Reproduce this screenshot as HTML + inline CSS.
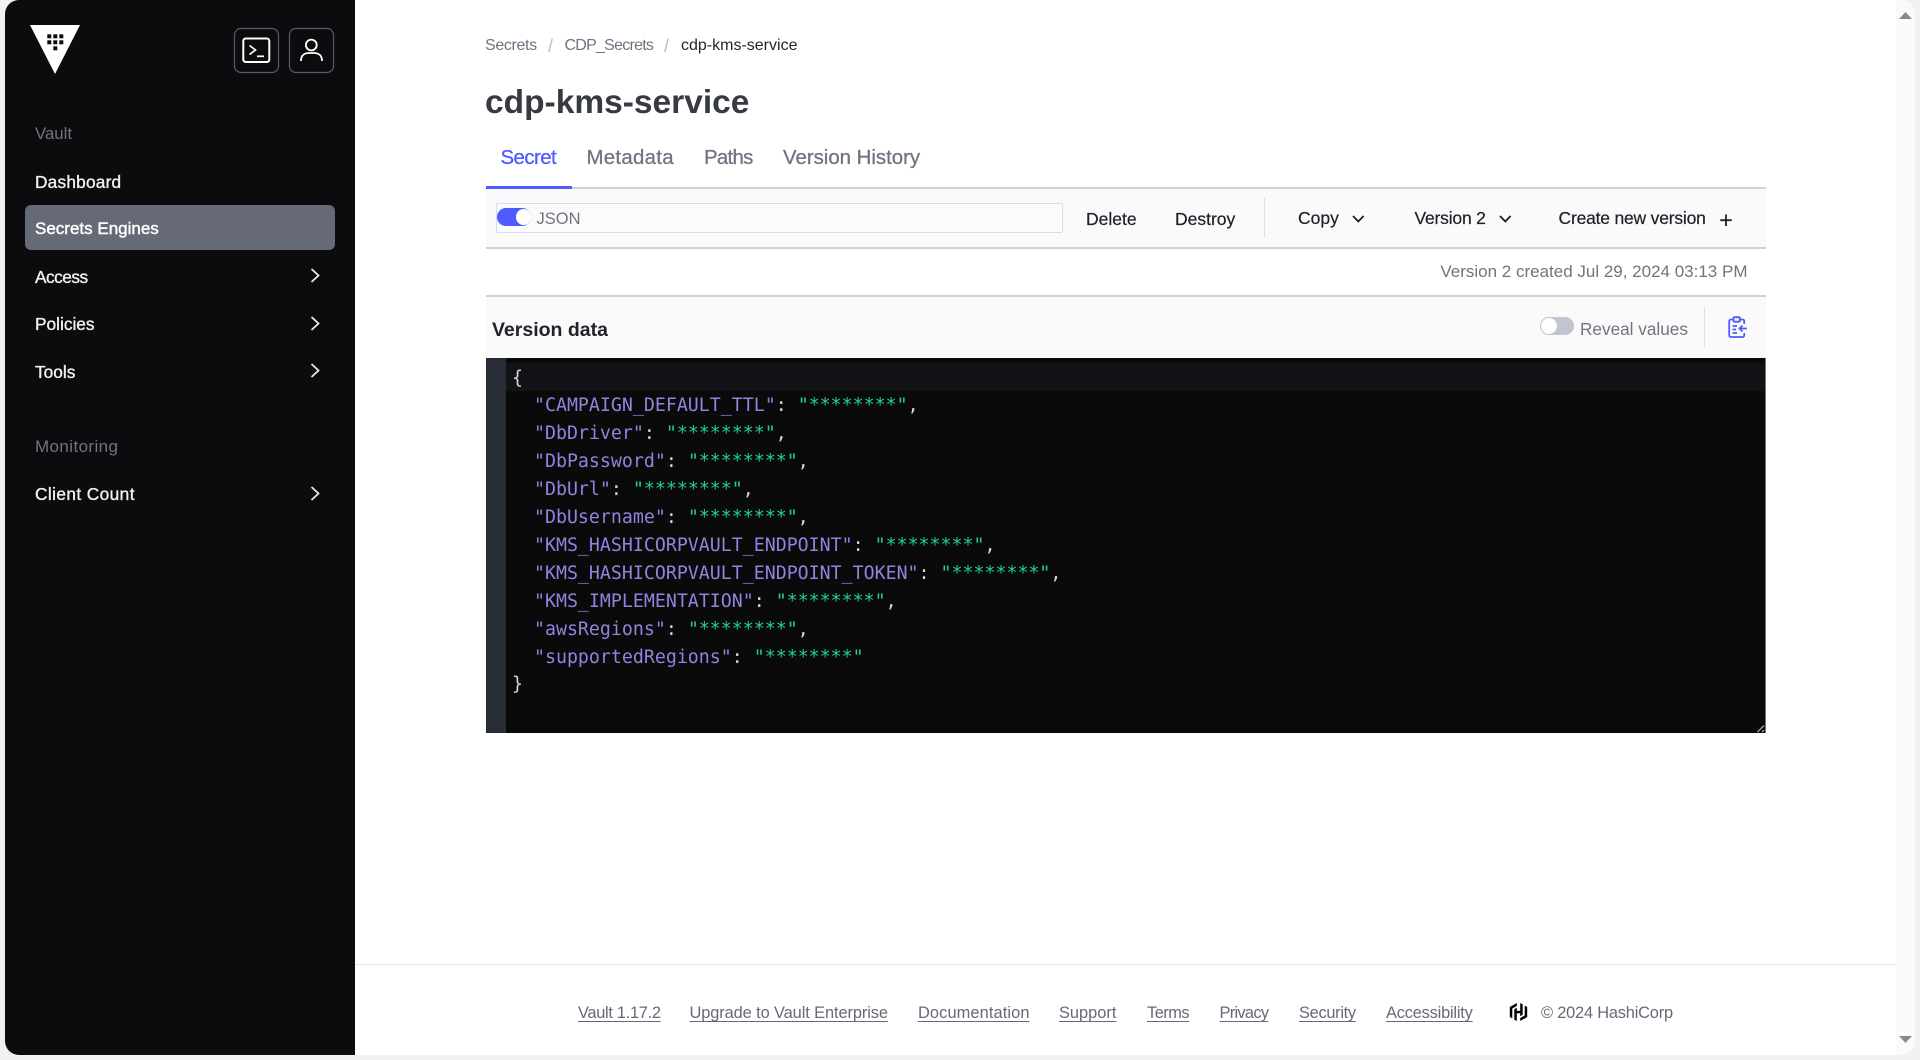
<!DOCTYPE html>
<html lang="en">
<head>
<meta charset="utf-8">
<title>cdp-kms-service</title>
<style>
html,body{margin:0;padding:0;width:1920px;height:1060px;overflow:hidden;background:#f1f1f1;font-family:"Liberation Sans",sans-serif}
#win{position:absolute;left:5px;top:0;width:1910px;height:1055px;background:#fff;border-radius:14px 14px 14px 14px;overflow:hidden}
#stage{position:absolute;left:0;top:0;width:1920px;height:1060px}
.a{position:absolute}
.t{position:absolute;white-space:nowrap;line-height:20px;height:20px}
.side{color:#f1f2f3;font-size:17.3px;-webkit-text-stroke:.35px #f1f2f3}
.lab{color:#6f7480;font-size:16.4px}
.tab{color:#6f7480;font-size:20.4px;-webkit-text-stroke:.3px #6f7480}
.bt{color:#1d2029;font-size:17.5px;-webkit-text-stroke:.2px #1d2029}
.foot{color:#656a76;font-size:16.4px;text-decoration:underline;text-underline-offset:3px}
svg{position:absolute;overflow:visible}
#code{position:absolute;left:512px;top:364.500px;margin:0;font-family:"DejaVu Sans Mono","Liberation Mono",monospace;font-size:18.25px;line-height:27.9px;color:#d8d8d8;white-space:pre}
#code i{font-style:normal;color:#8d85de}
#code b{font-weight:normal;color:#22cf9c}
</style>
</head>
<body>
<div id="win">
  <div class="a" style="left:0;top:0;width:350px;height:1055px;background:#0c0c0e"></div>
  <div class="a" style="left:1891px;top:0;width:19px;height:1055px;background:#fafafa"></div>
</div>
<div id="stage">
  <!-- scrollbar arrows -->
  <svg style="left:0;top:0" width="1920" height="1060"><path d="M1905.5 12L1912 19H1899Z M1899 1036H1912L1905.5 1043Z" fill="#8a8a8a"/></svg>

  <!-- logo -->
  <svg style="left:0;top:0" width="360" height="100">
    <path d="M30 25H80L55 74Z" fill="#fff"/>
    <g fill="#0c0c0e">
      <rect x="47.3" y="34.3" width="4" height="4"/><rect x="53.3" y="34.3" width="4" height="4"/><rect x="59.3" y="34.3" width="4" height="4"/>
      <rect x="47.3" y="40.3" width="4" height="4"/><rect x="53.3" y="40.3" width="4" height="4"/><rect x="59.3" y="40.3" width="4" height="4"/>
      <rect x="53.3" y="46.3" width="4" height="4"/>
    </g>
    <rect x="234.5" y="28.5" width="44" height="44" rx="6.5" fill="none" stroke="#565a66" stroke-width="1.2"/>
    <rect x="289.5" y="28.5" width="44" height="44" rx="6.5" fill="none" stroke="#565a66" stroke-width="1.2"/>
    <rect x="243.3" y="38.5" width="26" height="23.5" rx="2.5" fill="none" stroke="#fff" stroke-width="2"/>
    <path d="M249.5 45.5L255.5 50L249.5 54.5" fill="none" stroke="#fff" stroke-width="1.7"/>
    <path d="M257 56.3H264" fill="none" stroke="#fff" stroke-width="1.7"/>
    <circle cx="311.3" cy="45" r="5.4" fill="none" stroke="#fff" stroke-width="1.8"/>
    <path d="M301 61C301 55 305 53 309 53H314C318 53 322 55 322 61" fill="none" stroke="#fff" stroke-width="1.8"/>
  </svg>

  <div class="t lab" style="left:35px;top:124px;font-size:16.800px">Vault</div>
  <div class="t side" style="left:35px;top:171.500px;letter-spacing:.2px">Dashboard</div>
  <div class="a" style="left:25px;top:205px;width:310px;height:45px;background:#656a76;border-radius:6px"></div>
  <div class="t side" style="left:35px;top:219px;color:#fff;-webkit-text-stroke:.45px #fff;font-size:17px">Secrets Engines</div>
  <div class="t side" style="left:35px;top:266.500px;letter-spacing:-.5px">Access</div>
  <div class="t side" style="left:35px;top:313.500px">Policies</div>
  <div class="t side" style="left:35px;top:361.500px">Tools</div>
  <div class="t lab" style="left:35px;top:437px;letter-spacing:.4px;font-size:17px">Monitoring</div>
  <div class="t side" style="left:35px;top:483.500px;letter-spacing:.4px">Client Count</div>
  <svg style="left:0;top:0" width="360" height="520">
    <g fill="none" stroke="#e8e9eb" stroke-width="1.8">
      <path d="M311.5 269L318.5 275.500L311.5 282"/>
      <path d="M311.5 317L318.500 323.500L311.5 330"/>
      <path d="M311.5 364L318.500 370.500L311.5 377"/>
      <path d="M311.500 487L318.500 493.500L311.500 500"/>
    </g>
  </svg>

  <!-- breadcrumb -->
  <div class="t" style="left:485px;top:36px;font-size:16px;color:#6f7480;letter-spacing:-.35px">Secrets</div>
  <div class="t" style="left:548px;top:36px;font-size:18px;color:#b9bcc4">/</div>
  <div class="t" style="left:564.500px;top:36px;font-size:16px;color:#6f7480;letter-spacing:-.75px">CDP_Secrets</div>
  <div class="t" style="left:664px;top:36px;font-size:18px;color:#b9bcc4">/</div>
  <div class="t" style="left:681px;top:36px;font-size:16px;color:#1f2430">cdp-kms-service</div>

  <div class="t" style="left:485px;top:93px;font-size:33.500px;font-weight:bold;color:#383a42">cdp-kms-service</div>

  <!-- tabs -->
  <div class="t tab" style="left:500.500px;top:148px;color:#4e5bff;-webkit-text-stroke:.3px #4e5bff;letter-spacing:-.55px">Secret</div>
  <div class="t tab" style="left:586.500px;top:148px;letter-spacing:.3px">Metadata</div>
  <div class="t tab" style="left:704px;top:148px;letter-spacing:-.7px">Paths</div>
  <div class="t tab" style="left:783px;top:148px">Version History</div>

  <!-- toolbar -->
  <div class="a" style="left:486px;top:187px;width:1280px;height:62px;background:#fafafa;box-sizing:border-box;border-top:2px solid #cdd0d8;border-bottom:2px solid #cdd0d8"></div>
  <div class="a" style="left:486px;top:186px;width:86px;height:3px;background:#4e5bff"></div>
  <div class="a" style="left:496px;top:203px;width:567px;height:30px;box-sizing:border-box;border:1px solid #d5daf8;border-radius:2px;background:#fbfbfb"></div>
  <div class="a" style="left:497px;top:208px;width:34px;height:17.500px;background:#4e5bff;border-radius:9px"></div>
  <div class="a" style="left:515.500px;top:209px;width:15px;height:15.500px;background:#fff;border-radius:50%"></div>
  <div class="t" style="left:536.500px;top:208.500px;font-size:16.500px;color:#6f7480">JSON</div>

  <div class="t bt" style="left:1086px;top:209px">Delete</div>
  <div class="t bt" style="left:1175px;top:209px">Destroy</div>
  <div class="a" style="left:1264px;top:198px;width:1px;height:40px;background:#dcdee3"></div>
  <div class="t bt" style="left:1298px;top:208px">Copy</div>
  <div class="t bt" style="left:1414.500px;top:208px;letter-spacing:-.2px">Version 2</div>
  <div class="t bt" style="left:1558.500px;top:208px;letter-spacing:-.2px">Create new version</div>
  <svg style="left:0;top:0" width="1920" height="300">
    <g fill="none" stroke="#1d2029" stroke-width="1.800">
      <path d="M1353 216L1358.300 221.500L1363.600 216"/>
      <path d="M1500 216L1505.300 221.500L1510.600 216"/>
      <path d="M1726 214.500V226M1720.300 220.200H1731.700"/>
    </g>
  </svg>

  <div class="t" style="right:172.500px;top:262px;font-size:17px;color:#6f7480">Version 2 created Jul 29, 2024 03:13 PM</div>

  <!-- version data header -->
  <div class="a" style="left:486px;top:295px;width:1280px;height:63px;background:#fafafa;box-sizing:border-box;border-top:2px solid #cdd0d8"></div>
  <div class="t" style="left:492px;top:319.500px;font-size:19.500px;font-weight:bold;color:#20232b">Version data</div>
  <div class="a" style="left:1540px;top:317px;width:34px;height:18px;background:#c2c5cf;border-radius:9px"></div>
  <div class="a" style="left:1541px;top:318px;width:16px;height:16px;background:#fff;border-radius:50%"></div>
  <div class="t" style="left:1580px;top:318.500px;font-size:17.200px;color:#6f7480">Reveal values</div>
  <div class="a" style="left:1704px;top:307px;width:1px;height:40px;background:#dcdee3"></div>
  <svg style="left:1728px;top:316px" width="20" height="22" viewBox="0 0 20 22" fill="none" stroke="#4e5bff" stroke-width="1.800">
    <path d="M5.500 3.500H2.800C1.800 3.500 1.200 4.200 1.200 5V19.500C1.200 20.300 1.800 21 2.800 21H14.500C15.500 21 16.200 20.300 16.200 19.500V17"/>
    <path d="M11.800 3.500H14.500C15.500 3.500 16.200 4.200 16.200 5V8"/>
    <rect x="5.500" y="1.200" width="6.300" height="4.500" rx="1"/>
    <path d="M4.500 10H9M4.500 13.500H8M4.500 17H9"/>
    <path d="M19 12.500H11.500M14.500 9.500L11.500 12.500L14.500 15.500"/>
  </svg>

  <!-- code -->
  <div class="a" style="left:486px;top:358px;width:1280px;height:375px;background:#0a0a0b"></div>
  <div class="a" style="left:486px;top:358px;width:20px;height:375px;background:#282c34"></div>
  <div class="a" style="left:506px;top:363px;width:1260px;height:28px;background:#121316"></div>
  <div class="a" style="left:1765px;top:358px;width:1px;height:375px;background:#777"></div>
<pre id="code">{
  <i>"CAMPAIGN_DEFAULT_TTL"</i>: <b>"********"</b>,
  <i>"DbDriver"</i>: <b>"********"</b>,
  <i>"DbPassword"</i>: <b>"********"</b>,
  <i>"DbUrl"</i>: <b>"********"</b>,
  <i>"DbUsername"</i>: <b>"********"</b>,
  <i>"KMS_HASHICORPVAULT_ENDPOINT"</i>: <b>"********"</b>,
  <i>"KMS_HASHICORPVAULT_ENDPOINT_TOKEN"</i>: <b>"********"</b>,
  <i>"KMS_IMPLEMENTATION"</i>: <b>"********"</b>,
  <i>"awsRegions"</i>: <b>"********"</b>,
  <i>"supportedRegions"</i>: <b>"********"</b>
}</pre>
  <svg style="left:0;top:0" width="1920" height="760"><path d="M1757.500 732L1764 725.500M1762 732L1764 730" stroke="#999" stroke-width="1.500" fill="none"/></svg>

  <!-- footer -->
  <div class="a" style="left:355px;top:964px;width:1541px;height:1px;background:#e3e4e8"></div>
  <div class="t foot" style="left:578px;top:1003px;letter-spacing:-.3px">Vault 1.17.2</div>
  <div class="t foot" style="left:689.500px;top:1003px;letter-spacing:-.1px">Upgrade to Vault Enterprise</div>
  <div class="t foot" style="left:918px;top:1003px;letter-spacing:.1px">Documentation</div>
  <div class="t foot" style="left:1059px;top:1003px">Support</div>
  <div class="t foot" style="left:1147px;top:1003px;letter-spacing:-.5px">Terms</div>
  <div class="t foot" style="left:1219.500px;top:1003px;letter-spacing:-.7px">Privacy</div>
  <div class="t foot" style="left:1299px;top:1003px;letter-spacing:-.3px">Security</div>
  <div class="t foot" style="left:1386px;top:1003px;letter-spacing:-.2px">Accessibility</div>
  <svg style="left:1509px;top:1002.500px" width="19" height="18" viewBox="0 0 19 18" fill="#000">
    <path d="M7.800 0L.8 4V14L3.300 15.400V5.500L7.800 3Z"/>
    <path d="M11.200 18L18.200 14V4L15.700 2.600V12.500L11.200 15Z"/>
    <path d="M5.300 6.200L7.800 4.800V7.900H11.200V0L13.700 1.400V11.800L11.200 13.200V10.200H7.800V18L5.300 16.600Z"/>
  </svg>
  <div class="t" style="left:1541px;top:1003px;font-size:16.400px;color:#656a76;letter-spacing:-.2px">© 2024 HashiCorp</div>
</div>
</body>
</html>
